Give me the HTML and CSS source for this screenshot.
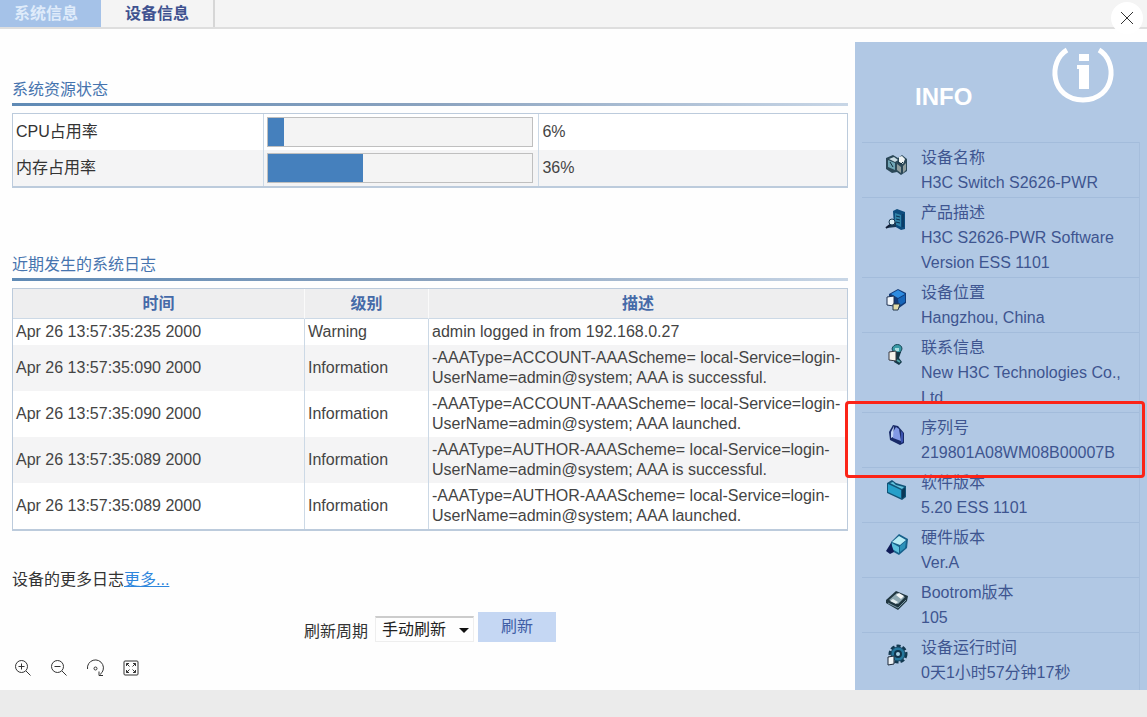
FILE: index.html
```html
<!DOCTYPE html>
<html lang="zh-CN">
<head>
    <meta charset="UTF-8">
    <meta name="viewport" content="width=device-width, initial-scale=1.0">
    <title>系统信息</title>
    <link rel="stylesheet" href="styles.css">
</head>
<body>
    <div class="viewer">
        <nav class="tabs">
            <a class="tab active" href="#system">系统信息</a>
            <a class="tab" href="#device">设备信息</a>
        </nav>

        <div class="content">
            <main class="main">
                <h2 class="section-title">系统资源状态</h2>
                <table class="grid usage">
                    <tr>
                        <td class="usage-name">CPU占用率</td>
                        <td class="usage-meter"><div class="bar"><div class="bar-fill" style="width: 6%"></div></div></td>
                        <td>6%</td>
                    </tr>
                    <tr>
                        <td class="usage-name">内存占用率</td>
                        <td class="usage-meter"><div class="bar"><div class="bar-fill" style="width: 36%"></div></div></td>
                        <td>36%</td>
                    </tr>
                </table>

                <h2 class="section-title">近期发生的系统日志</h2>
                <table class="grid log">
                    <thead>
                        <tr>
                            <th class="log-time">时间</th>
                            <th class="log-level">级别</th>
                            <th>描述</th>
                        </tr>
                    </thead>
                    <tbody>
                        <tr>
                            <td>Apr 26 13:57:35:235 2000</td>
                            <td>Warning</td>
                            <td>admin logged in from 192.168.0.27</td>
                        </tr>
                        <tr>
                            <td>Apr 26 13:57:35:090 2000</td>
                            <td>Information</td>
                            <td>-AAAType=ACCOUNT-AAAScheme= local-Service=login-<br>UserName=admin@system; AAA is successful.</td>
                        </tr>
                        <tr>
                            <td>Apr 26 13:57:35:090 2000</td>
                            <td>Information</td>
                            <td>-AAAType=ACCOUNT-AAAScheme= local-Service=login-<br>UserName=admin@system; AAA launched.</td>
                        </tr>
                        <tr>
                            <td>Apr 26 13:57:35:089 2000</td>
                            <td>Information</td>
                            <td>-AAAType=AUTHOR-AAAScheme= local-Service=login-<br>UserName=admin@system; AAA is successful.</td>
                        </tr>
                        <tr>
                            <td>Apr 26 13:57:35:089 2000</td>
                            <td>Information</td>
                            <td>-AAAType=AUTHOR-AAAScheme= local-Service=login-<br>UserName=admin@system; AAA launched.</td>
                        </tr>
                    </tbody>
                </table>

                <p class="more">设备的更多日志<a href="#logs">更多...</a></p>

                <form class="refresh">
                    <label for="period">刷新周期</label>
                    <span class="select-wrap">
                        <select id="period">
                            <option>手动刷新</option>
                        </select>
                    </span>
                    <button type="button" class="refresh-btn">刷新</button>
                </form>
            </main>

            <aside class="info">
                <div class="info-head">
                    <h1>INFO</h1>
                    <svg class="info-logo" width="64" height="56" viewBox="0 0 64 56">
                        <path d="M16 3 C-3 14 -1 52 32 53 C65 52 67 14 48 3" fill="none" stroke="#fff" stroke-width="5"/>
                        <rect x="28" y="7" width="10" height="7" fill="#fff"/>
                        <path d="M26 18H38V42H28V22H26Z" fill="#fff"/>
                    </svg>
                </div>
                <ul class="info-list">
                    <li>
                        <svg class="icon" viewBox="0 0 24 24">
                            <path d="M1 5l7-3 5 3 4-3 5 4v12l-6 4-4-3-5 1-6-4z" fill="#2b4858"/>
                            <path d="M3 7l7 3v7l-7-3z" fill="#6fa5b5"/>
                            <path d="M4 6l5-2 4 3-3 2z" fill="#c9dce4"/>
                            <path d="M14 4l3-1 3 3-2 5-4-2z" fill="#eef3f4"/>
                            <path d="M12 11l4 3v6l-4-3zM18 13l3-3v7l-3 3z" fill="#8f9d9d"/>
                            <path d="M5 9l3 5M13 9l3 2 2-2" stroke="#14303e" fill="none"/>
                        </svg>
                        <dl><dt>设备名称</dt><dd>H3C Switch S2626-PWR</dd></dl>
                    </li>
                    <li>
                        <svg class="icon" viewBox="0 0 24 24">
                            <path d="M8 3l4-2 8 3v17l-4 1-7-4z" fill="#0d4c7d"/>
                            <path d="M10 5l6 2v12l-6-3z" fill="#2f83a8"/>
                            <path d="M11 8l4 1M11 11l4 1M11 14l4 1M18 6v13" stroke="#0b3150"/>
                            <path d="M2 20l6-9 3 4v4z" fill="#173853"/>
                            <circle cx="7" cy="14" r="3" fill="#d8edf3" stroke="#173853"/>
                            <path d="M5 17l-4 3" stroke="#111c35" stroke-width="2"/>
                        </svg>
                        <dl><dt>产品描述</dt><dd>H3C S2626-PWR Software<br>Version ESS 1101</dd></dl>
                    </li>
                    <li>
                        <svg class="icon" viewBox="0 0 24 24">
                            <path d="M4 6l9-5 8 4v10l-7 5-10-6z" fill="#123b78"/>
                            <path d="M6 6l7-4 7 4-7 4z" fill="#2f8ce0"/>
                            <path d="M13 11l7-4v7l-6 4z" fill="#1766b9"/>
                            <path d="M2 9l7-1v10l-7-1z" fill="#f2f7fb" stroke="#203353"/>
                            <path d="M8 16h7l-2 6H8z" fill="#e3dda8" stroke="#27394b"/>
                        </svg>
                        <dl><dt>设备位置</dt><dd>Hangzhou, China</dd></dl>
                    </li>
                    <li>
                        <svg class="icon" viewBox="0 0 24 24">
                            <path d="M7 6c1-6 10-6 10 0l-2 4H9z" fill="#3a9aa6" stroke="#164657"/>
                            <path d="M10 5h4v3h-4z" fill="#a8dce0"/>
                            <path d="M11 9h5l-2 6 3 4-3 3-5-3z" fill="#143747"/>
                            <path d="M4 9l7-1v10l-7-1z" fill="#f6f2ec" stroke="#383a42"/>
                            <path d="M12 17l3 2" stroke="#53a8aa" stroke-width="2"/>
                        </svg>
                        <dl><dt>联系信息</dt><dd>New H3C Technologies Co.,<br>Ltd.</dd></dl>
                    </li>
                    <li class="marked">
                        <svg class="icon" viewBox="0 0 24 24">
                            <path d="M4 9l4-7 5 1 6 7v10l-4 2-10-5z" fill="#182a68"/>
                            <path d="M8 9l3-5 3 2 2 12-8-3z" fill="#8299e5"/>
                            <path d="M6 9l3-6-1 11-2 1z" fill="#c0d3f2"/>
                            <path d="M16 8l2 2v9l-2 1z" fill="#3b52b0"/>
                        </svg>
                        <dl><dt>序列号</dt><dd>219801A08WM08B00007B</dd></dl>
                    </li>
                    <li>
                        <svg class="icon" viewBox="0 0 24 24">
                            <path d="M2 5l5-3 4 3 10 3v11l-4 3-15-7z" fill="#125478"/>
                            <path d="M3 6l13 6v8L3 14z" fill="#26a0ca"/>
                            <path d="M5 5l3-1 3 3 8 2-2 2z" fill="#63c3de"/>
                            <path d="M17 12l3-2v8l-3 3z" fill="#0b3857"/>
                        </svg>
                        <dl><dt>软件版本</dt><dd>5.20 ESS 1101</dd></dl>
                    </li>
                    <li>
                        <svg class="icon" viewBox="0 0 24 24">
                            <path d="M6 9l8-8 9 5-1 9-8 7-9-5z" fill="#17608a"/>
                            <path d="M7 9l7-6 7 4-6 5z" fill="#b9ecf5"/>
                            <path d="M7 10l7 4v6l-7-4z" fill="#5cc0dc"/>
                            <path d="M15 13l6-5-1 7-5 4z" fill="#2d92ba"/>
                            <path d="M1 18l5-8 3 9-4 2z" fill="#101c58"/>
                        </svg>
                        <dl><dt>硬件版本</dt><dd>Ver.A</dd></dl>
                    </li>
                    <li>
                        <svg class="icon" viewBox="0 0 24 24">
                            <path d="M1 12l10-9 12 5-1 5-9 9-12-7z" fill="#203640"/>
                            <path d="M4 12l8-7 8 4-7 7z" fill="#8fa9b3"/>
                            <path d="M11 7l3-2 5 3-3 3z" fill="#f5f8f8"/>
                            <path d="M5 13l3-2 5 3-2 2z" fill="#e3edef"/>
                            <path d="M3 15l10 5 8-8" stroke="#7897a4" fill="none"/>
                        </svg>
                        <dl><dt>Bootrom版本</dt><dd>105</dd></dl>
                    </li>
                    <li>
                        <svg class="icon" viewBox="0 0 24 24">
                            <circle cx="13" cy="11" r="8" fill="none" stroke="#12384f" stroke-width="3" stroke-dasharray="4 2"/>
                            <circle cx="13" cy="11" r="7" fill="#25779c" stroke="#154765"/>
                            <circle cx="13" cy="11" r="3" fill="#a9d2e6" stroke="#10344c" stroke-width="2"/>
                            <path d="M3 14l6-1v8l-6 1z" fill="#eef3f6" stroke="#1d2939"/>
                        </svg>
                        <dl><dt>设备运行时间</dt><dd>0天1小时57分钟17秒</dd></dl>
                    </li>
                </ul>
            </aside>
        </div>

        <button type="button" class="close" aria-label="关闭">
            <svg width="12" height="12" viewBox="0 0 12 12"><path d="M0 0L12 12M12 0L0 12"/></svg>
        </button>

        <div class="toolbar">
            <button type="button" aria-label="放大">
                <svg viewBox="0 0 16 16"><circle cx="6.5" cy="6.5" r="6"/><path d="M11 11l4.500 4.500M3.500 6.500h6M6.500 3.500v6"/></svg>
            </button>
            <button type="button" aria-label="缩小">
                <svg viewBox="0 0 16 16"><circle cx="6.5" cy="6.5" r="6"/><path d="M11 11l4.500 4.500M3.500 6.500h6"/></svg>
            </button>
            <button type="button" aria-label="旋转">
                <svg viewBox="0 0 16 16"><path d="M0.500 9A8 8 0 1 1 13 14.500M12 11.500v4h4"/><circle cx="8.500" cy="8.500" r="1.500"/></svg>
            </button>
            <button type="button" aria-label="全屏">
                <svg viewBox="0 0 16 16"><rect x="1" y="1" width="14" height="14" rx="1"/><path d="M3.500 6V3.500H6M3.500 3.500l3 3M10 3.500h2.500V6M12.500 3.500l-3 3M3.500 10v2.500H6M3.500 12.500l3-3M10 12.500h2.500V10M12.500 12.500l-3-3"/></svg>
            </button>
        </div>
    </div>
</body>
</html>
```

FILE: styles.css
```css
* {
    box-sizing: border-box;
}
body {
    display: flex;
    flex-direction: column;
    min-height: 100vh;
    margin: 0;
    padding-bottom: 27px;
    background: #ebebeb;
    color: #444;
    font-family: "Liberation Sans", "Noto Sans CJK SC", sans-serif;
    font-size: 16px;
    line-height: 20px;
}
h1, h2, p, ul, dl, dd {
    margin: 0;
    padding: 0;
}
button, select {
    font: inherit;
    border: none;
    padding: 0;
    cursor: pointer;
}
.viewer {
    position: relative;
    flex: 1;
    display: flex;
    flex-direction: column;
    background: #fefefe;
}

/* tabs */
.tabs {
    display: flex;
    height: 29px;
    background: #f4f4f4;
    border-bottom: 2px solid #dedede;
}
.tab {
    padding: 0 24px;
    border-right: 2px solid #d6d6d6;
    color: #3f5290;
    font-weight: bold;
    line-height: 27px;
    text-decoration: none;
}
.tab.active {
    padding: 0 23px 0 14px;
    border-right: none;
    background: #a5c2e8;
    color: #dfebfa;
}

.content {
    flex: 1;
    display: flex;
}
.main {
    flex: 1;
    padding: 49px 7px 0 12px;
}
.section-title {
    padding-bottom: 1px;
    border-bottom: 3px solid;
    border-image: linear-gradient(to right, #5f8ab5, #8ba3bf 50%, #c8d6e6) 1;
    color: #4674ae;
    font-size: 16px;
    font-weight: normal;
    line-height: 24px;
    margin-bottom: 7px;
}

/* tables */
.grid {
    width: 100%;
    table-layout: fixed;
    border: 1px solid #bccbdc;
    border-bottom-width: 2px;
    border-spacing: 0;
    background: #fff;
}
.grid td {
    padding: 3px;
    border-left: 1px solid #ccd9e6;
}
.grid td:first-child {
    border-left: none;
}
.usage {
    margin-bottom: 65px;
}
.usage tr:nth-child(even),
.log tbody tr:nth-child(even) {
    background: #f4f4f5;
}
.usage-name {
    width: 30%;
    color: #333;
}
.usage-meter {
    width: 33%;
}
.bar {
    height: 30px;
    margin-right: 2px;
    border: 1px solid #bfbfbf;
    background: #f4f4f4;
}
.bar-fill {
    height: 28px;
    background: #4580bd;
}
.log th {
    padding: 5px 3px 4px;
    border-left: 1px solid #fafafa;
    border-bottom: 1px solid #ccd9e6;
    background: #eeeeef;
    color: #456aa8;
    font-weight: bold;
}
.log .log-time {
    width: 291px;
    border-left: none;
}
.log-level {
    width: 124px;
}

.more {
    margin-top: 39px;
    color: #333;
}
.more a {
    color: #2e86dc;
}
.refresh {
    display: flex;
    justify-content: center;
    align-items: flex-end;
    margin-top: 22px;
    color: #333;
}
.select-wrap {
    position: relative;
    margin: 0 4px 0 7px;
}
.select-wrap::after {
    content: "";
    position: absolute;
    right: 5px;
    top: 12px;
    border: 5px solid transparent;
    border-top-color: #111;
    border-bottom: none;
    pointer-events: none;
}
.select-wrap select {
    display: block;
    width: 99px;
    height: 26px;
    padding-left: 6px;
    appearance: none;
    border: 1px solid #eee;
    border-top: 2px solid #ccc;
    background: #fefefe;
    color: #222;
}
.refresh-btn {
    width: 78px;
    height: 30px;
    background: #c5d7f3;
    color: #3f5ea6;
}

/* info panel */
.info {
    width: 292px;
    margin-top: 13px;
    padding: 0 7px;
    background: #b1c8e4;
    color: #3e5590;
}
.info-head {
    display: flex;
    justify-content: space-between;
    height: 100px;
    padding: 5px 25px 0 53px;
}
.info-head h1 {
    padding-top: 38px;
    color: #fff;
    font-size: 24px;
    line-height: 24px;
}
.info-list {
    height: calc(100% - 100px);
    border-right: 1px solid #a6bedc;
    list-style: none;
}
.info-list li {
    position: relative;
    display: flex;
    gap: 12px;
    padding: 2px 0 2px 23px;
    border-top: 1px solid #a3bcdb;
    line-height: 25px;
}
.icon {
    flex: none;
    width: 24px;
    height: 24px;
    margin-top: 8px;
}
.marked::after {
    content: "";
    position: absolute;
    z-index: 1;
    top: -12px;
    right: -6px;
    bottom: -11px;
    left: -17px;
    border: 3px solid #fb2418;
    border-radius: 4px;
}

/* viewer controls */
.close {
    position: absolute;
    top: 2px;
    right: 4px;
    display: flex;
    align-items: center;
    justify-content: center;
    width: 32px;
    height: 32px;
    border-radius: 50%;
    background: #fff;
}
.close svg,
.toolbar svg {
    fill: none;
    stroke: #333;
}
.toolbar {
    position: absolute;
    left: 15px;
    bottom: 14px;
    display: flex;
    gap: 20px;
}
.toolbar button {
    width: 16px;
    height: 16px;
    background: none;
}
.toolbar svg {
    display: block;
    overflow: visible;
}
```
